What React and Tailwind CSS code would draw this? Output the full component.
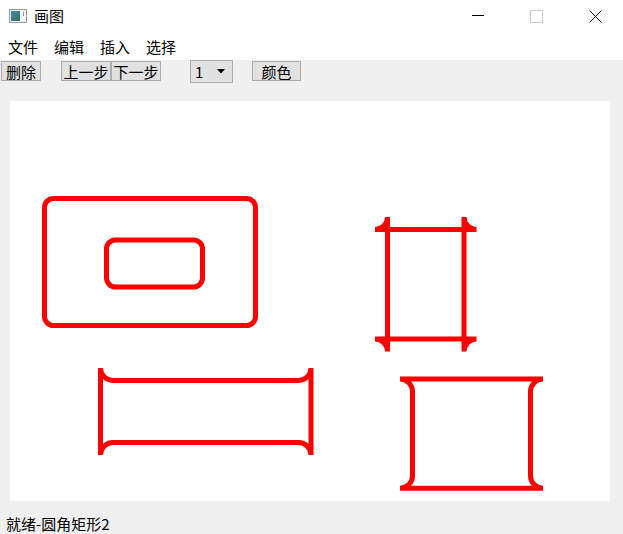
import React from "react";

const font = "font-['Noto_Sans_CJK_SC','Microsoft_YaHei',sans-serif]";

function AppIcon() {
  return (
    <svg width="18" height="14" viewBox="0 0 18 14">
      <defs>
        <linearGradient id="ic" x1="0" y1="0" x2="1" y2="1">
          <stop offset="0" stopColor="#4a8aa8" />
          <stop offset="1" stopColor="#2f6f5e" />
        </linearGradient>
      </defs>
      <rect x="0.5" y="0.5" width="17" height="13" fill="#f4f4f4" stroke="#9a9a9a" />
      <rect x="2" y="2" width="9" height="10" fill="url(#ic)" />
      <rect x="14" y="3" width="1" height="4" fill="#7aa7a0" />
    </svg>
  );
}

function TitleBar() {
  return (
    <div className="h-[30px] bg-white flex items-center relative">
      <div className="ml-[9px] mt-[2px]">
        <AppIcon />
      </div>
      <span className="ml-[7px] text-[15px] leading-none text-black">画图</span>
      <div className="absolute left-[472px] top-[15px] w-[12px] h-px bg-black" />
      <div className="absolute left-[530px] top-[10px] w-[13px] h-[13px] border border-[#cccccc]" />
      <svg className="absolute left-[589px] top-[10px]" width="13" height="13" viewBox="0 0 13 13">
        <path d="M0.5 0.5 L12.5 12.5 M12.5 0.5 L0.5 12.5" stroke="#000" strokeWidth="1" />
      </svg>
    </div>
  );
}

function MenuBar() {
  const items = ["文件", "编辑", "插入", "选择"];
  return (
    <div className="h-[30px] bg-white flex items-center px-[8px] gap-[16px] pt-[2px]">
      {items.map((m) => (
        <span key={m} className="text-[15px] leading-none text-black">
          {m}
        </span>
      ))}
    </div>
  );
}

function Btn({ children, className = "" }) {
  return (
    <div
      className={`h-[20px] mt-[1px] border border-[#adadad] bg-[#e1e1e1] flex items-center justify-center text-[15px] leading-none text-black ${className}`}
    >
      {children}
    </div>
  );
}

function ToolBar() {
  return (
    <div className="h-[41px] flex items-start">
      <Btn className="ml-[1px] w-[40px]">删除</Btn>
      <Btn className="ml-[20px] w-[50px]">上一步</Btn>
      <Btn className="w-[50px]">下一步</Btn>
      <div className="ml-[29px] w-[43px] h-[23px] border border-[#adadad] bg-[#e1e1e1] flex items-center">
        <span className="ml-[4px] text-[15px] leading-none text-black">1</span>
        <svg className="ml-[14px]" width="8" height="5" viewBox="0 0 8 5">
          <path d="M0 0 H8 L4 4.5 Z" fill="#000" />
        </svg>
      </div>
      <Btn className="ml-[19px] w-[49px]">颜色</Btn>
    </div>
  );
}

function Drawing() {
  const s = { fill: "none", stroke: "#ff0000", strokeWidth: 5 };
  return (
    <svg width="600" height="400" viewBox="0 0 600 400">
      <rect x="34.5" y="97.5" width="211" height="127" rx="9" {...s} />
      <rect x="96.5" y="139" width="96" height="47" rx="9" {...s} />

      <path
        d="M377.5 116 V250.5 M454 116 V250.5 M365 128.5 H466.5 M365 238 H466.5
           M377.5 116 A12.5 12.5 0 0 1 365 128.5
           M454 116 A12.5 12.5 0 0 0 466.5 128.5
           M454 250.5 A12.5 12.5 0 0 1 466.5 238
           M377.5 250.5 A12.5 12.5 0 0 0 365 238"
        {...s}
      />

      <path
        d="M90.5 267 V354 M301 267 V354 M103 279.5 H288.5 M103 341.5 H288.5
           M90.5 267 A12.5 12.5 0 0 0 103 279.5
           M301 267 A12.5 12.5 0 0 1 288.5 279.5
           M90.5 354 A12.5 12.5 0 0 1 103 341.5
           M301 354 A12.5 12.5 0 0 0 288.5 341.5"
        {...s}
      />

      <path
        d="M390 278 H533 M390 387.2 H533 M402.5 290.5 V374.7 M520.5 290.5 V374.7
           M390 278 A12.5 12.5 0 0 1 402.5 290.5
           M533 278 A12.5 12.5 0 0 0 520.5 290.5
           M390 387.2 A12.5 12.5 0 0 0 402.5 374.7
           M533 387.2 A12.5 12.5 0 0 1 520.5 374.7"
        {...s}
      />
    </svg>
  );
}

export default function App() {
  return (
    <div className={`w-[623px] h-[534px] bg-[#f0f0f0] flex flex-col overflow-hidden ${font}`}>
      <TitleBar />
      <MenuBar />
      <ToolBar />
      <div className="ml-[10px] w-[600px] h-[400px] bg-white">
        <Drawing />
      </div>
      <div className="h-[33px] flex items-center pl-[6px] pt-[11px]">
        <span className="text-[15px] leading-none text-black">就绪-圆角矩形2</span>
      </div>
    </div>
  );
}
